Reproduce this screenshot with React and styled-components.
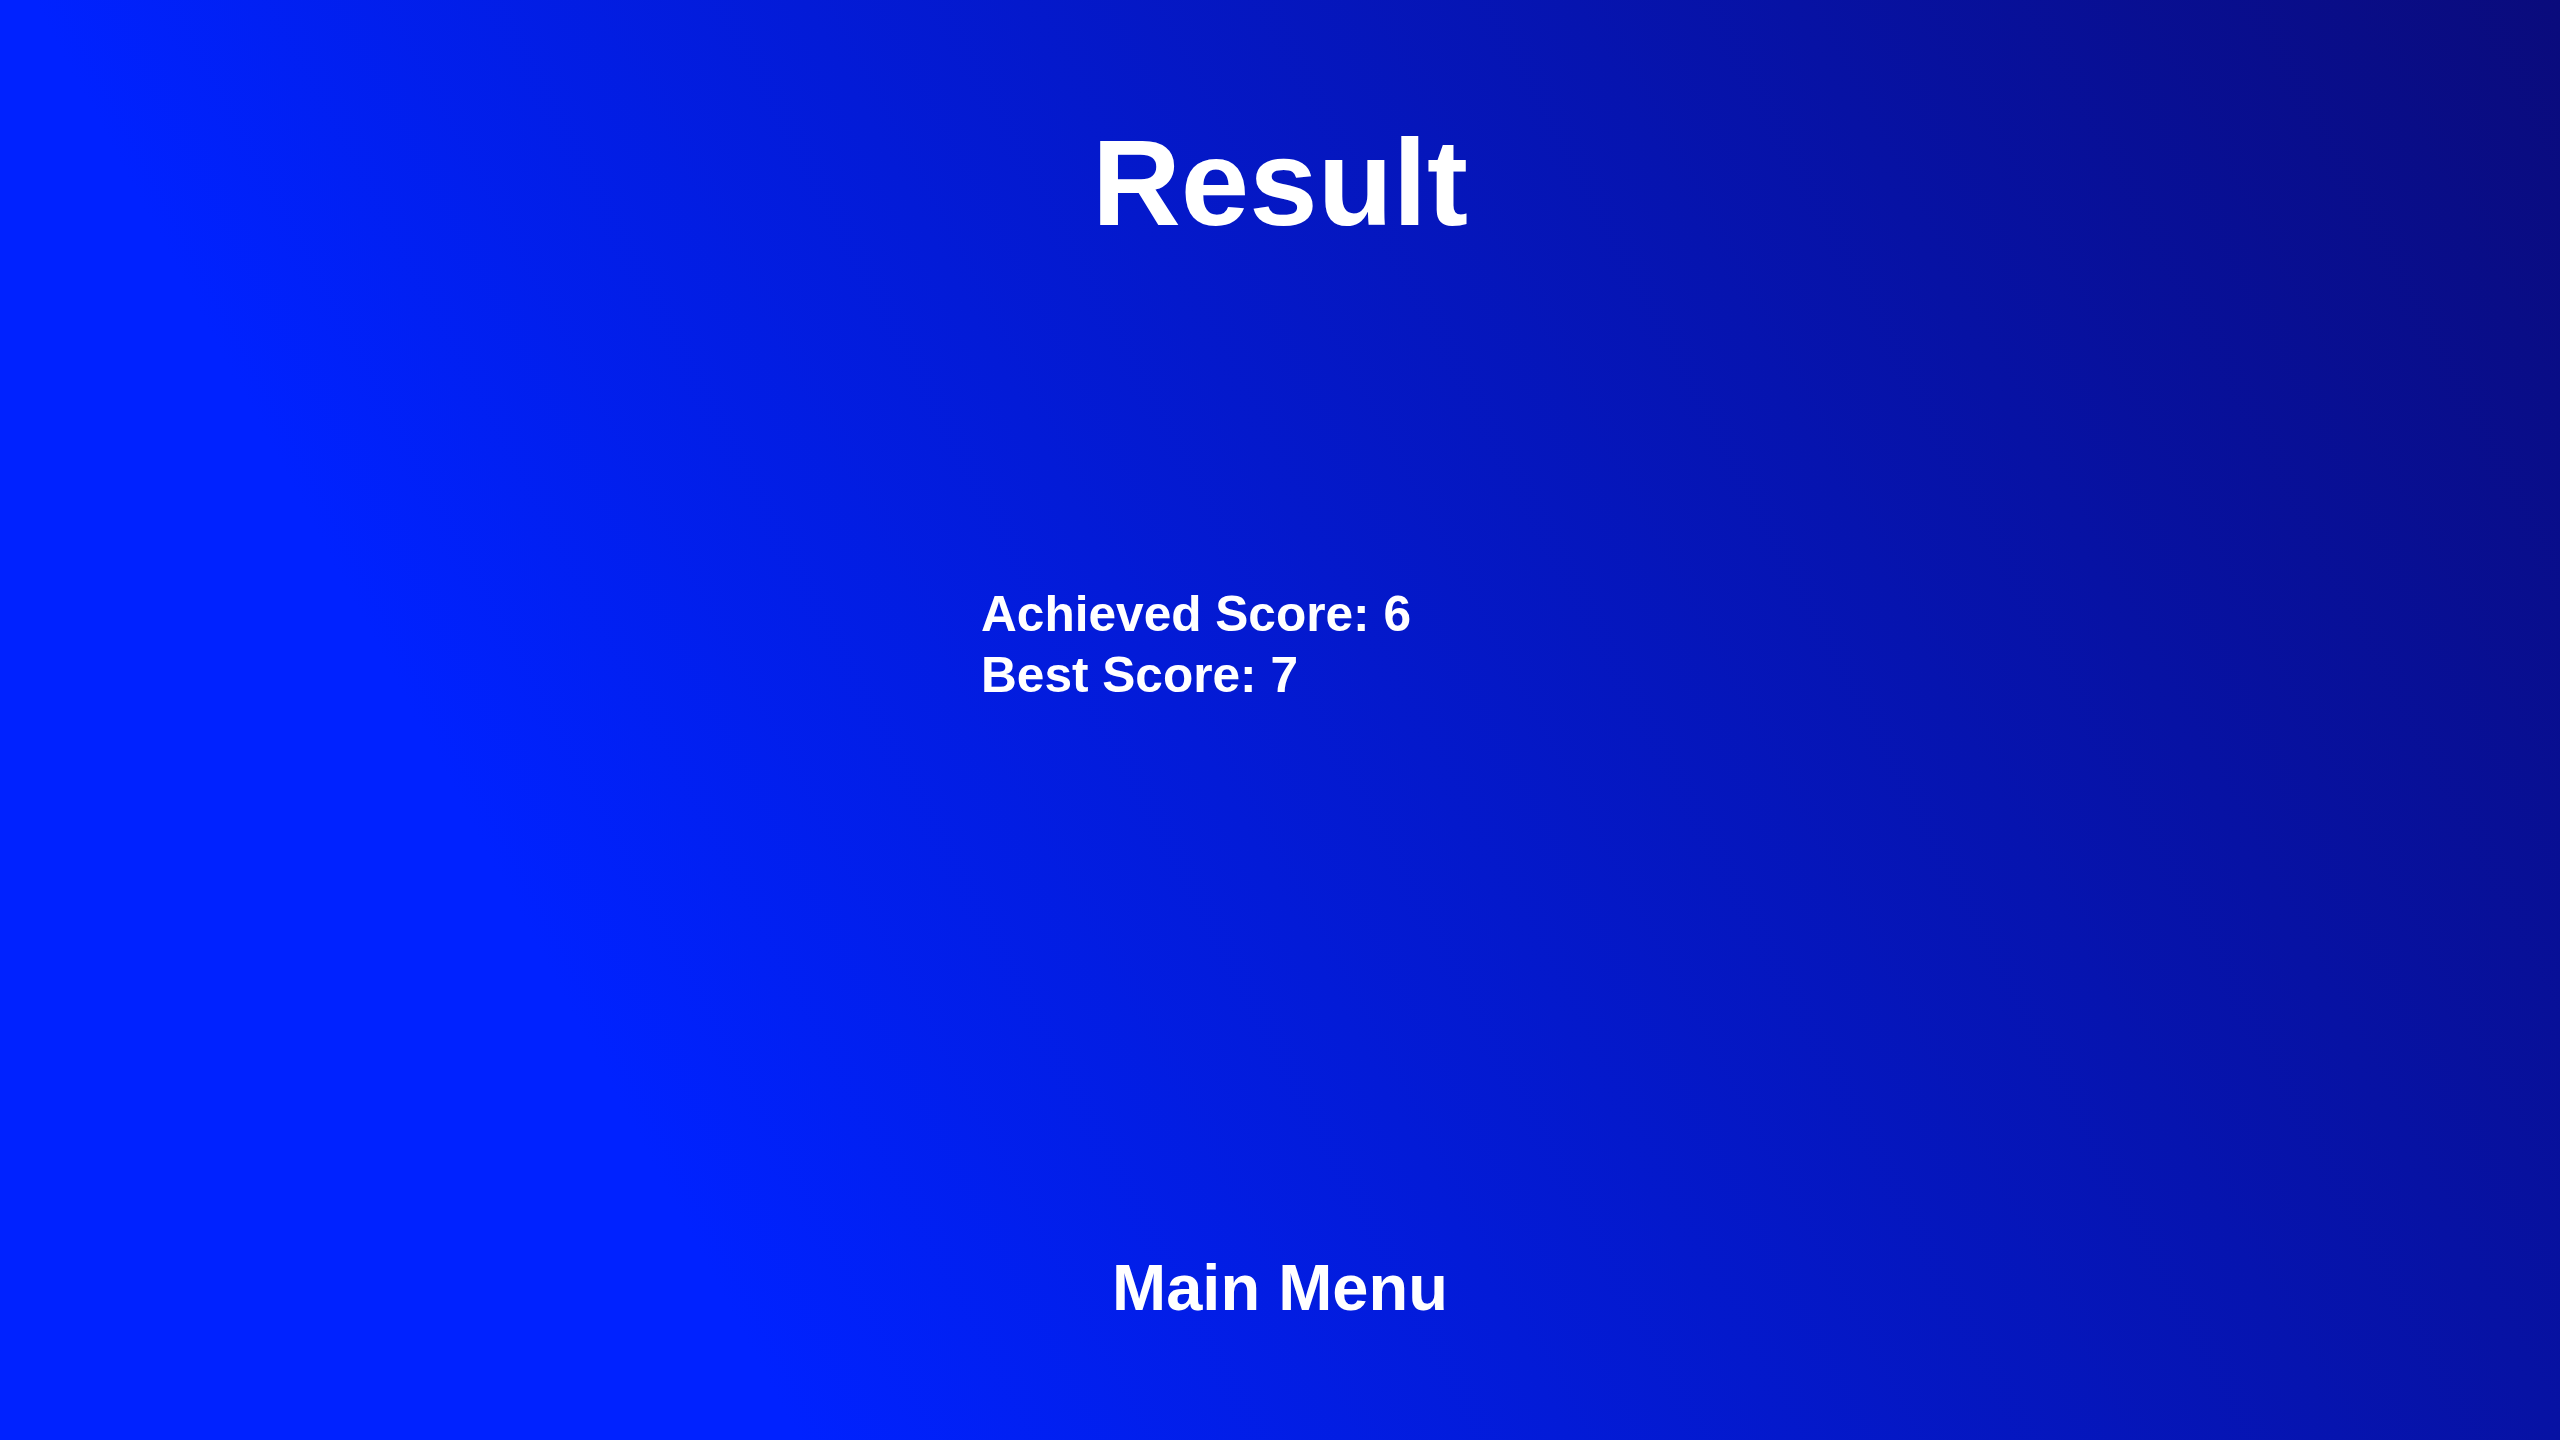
import React from "react";
import styled, { createGlobalStyle } from "styled-components";

const Global = createGlobalStyle`
  html, body { margin: 0; padding: 0; height: 100%; }
  body { font-family: "Liberation Sans", Arial, Helvetica, sans-serif; }
  #root { height: 100%; }
`;

const Screen = styled.div`
  height: 100vh;
  box-sizing: border-box;
  display: flex;
  flex-direction: column;
  align-items: center;
  padding: 121px 0 120px;
  color: #ffffff;
  background: linear-gradient(62deg, #0022ff 24%, #0a0b7c 100%);
`;

const Title = styled.h1`
  margin: 0;
  font-size: 123px;
  line-height: 1;
  font-weight: 700;
`;

const ScoreBlock = styled.div`
  margin-top: 340px;
  width: 598px;
  display: flex;
  flex-direction: column;
`;

const ScoreLine = styled.div`
  font-size: 49.6px;
  line-height: 61px;
  font-weight: 700;
`;

const MenuButton = styled.button`
  margin-top: auto;
  background: none;
  border: none;
  padding: 0;
  color: #ffffff;
  font-family: inherit;
  font-size: 65px;
  line-height: 1;
  font-weight: 700;
  cursor: pointer;
`;

export default function App() {
  const achieved = 6;
  const best = 7;
  return (
    <>
      <Global />
      <Screen>
        <Title>Result</Title>
        <ScoreBlock>
          <ScoreLine>Achieved Score: {achieved}</ScoreLine>
          <ScoreLine>Best Score: {best}</ScoreLine>
        </ScoreBlock>
        <MenuButton>Main Menu</MenuButton>
      </Screen>
    </>
  );
}
